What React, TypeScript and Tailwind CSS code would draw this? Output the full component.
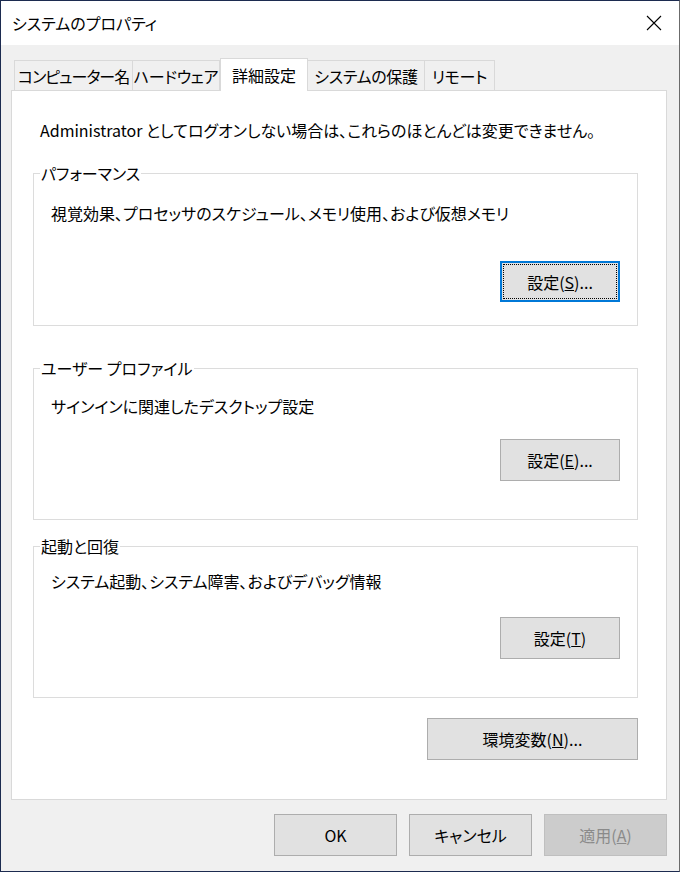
import React from "react";

const font = "font-['Noto_Sans_CJK_JP','Noto_Sans',sans-serif] [font-feature-settings:'palt']";

function Btn({ children, w = "w-[120px]", focused = false, disabled = false }: { children: React.ReactNode; w?: string; focused?: boolean; disabled?: boolean }) {
  if (focused) {
    return (
      <div className={`${w} h-[41px] border-2 border-[#0078d7] bg-[#e1e1e1] p-[1px]`}>
        <div className="h-full w-full border border-dotted border-black flex items-center justify-center text-[16px] text-black">
          {children}
        </div>
      </div>
    );
  }
  return (
    <div
      className={`${w} h-[42px] border flex items-center justify-center text-[16px] ${
        disabled ? "border-[#bfbfbf] bg-[#cccccc] text-[#8a8a8a]" : "border-[#adadad] bg-[#e1e1e1] text-black"
      }`}
    >
      {children}
    </div>
  );
}

function Group({ label, text, btn, h, textTop, btnTop }: { label: string; text: string; btn: React.ReactNode; h: string; textTop: string; btnTop: string }) {
  return (
    <div className={`relative border border-[#dcdcdc] ${h} flex flex-col`}>
      <div className="absolute left-[6px] -top-[13px] bg-white px-[1px] text-[16px] leading-[24px] text-black">{label}</div>
      <div className={`${textTop} pl-[17px] text-[16px] leading-[24px] text-black`}>{text}</div>
      <div className={`${btnTop} flex justify-end pr-[17px]`}>{btn}</div>
    </div>
  );
}

function Tab({ label, w, active = false, tight = false }: { label: string; w: string; active?: boolean; tight?: boolean }) {
  if (active) {
    return (
      <div className={`${w} h-[33px] -mb-[1px] relative z-10 bg-white border border-b-0 border-[#d9d9d9] flex items-center justify-center whitespace-nowrap text-[16px] text-black`}>
        {label}
      </div>
    );
  }
  return (
    <div
      className={`${w} h-[30px] bg-[#f0f0f0] border border-b-0 border-[#d9d9d9] -ml-[1px] first:ml-0 flex items-center justify-center whitespace-nowrap ${
        tight ? "tracking-[-1px]" : "tracking-[-0.3px]"
      } text-[16px] text-black`}
    >
      {label}
    </div>
  );
}

export default function App() {
  return (
    <div className={`${font} w-[680px] h-[872px] flex flex-col bg-[#f0f0f0] border-l border-t border-b border-[#1c2b50] border-r border-r-[#6b6b6b] overflow-hidden`}>
      <div className="h-[44px] bg-white flex items-center justify-between pl-[11px] pr-[17px]">
        <span className="text-[16px] text-black">システムのプロパティ</span>
        <svg width="16" height="16" viewBox="0 0 16 16">
          <path d="M1 1 L15 15 M15 1 L1 15" stroke="#000" strokeWidth="1.1" fill="none" />
        </svg>
      </div>
      <div className="flex-1 flex flex-col pl-[10px] pr-[12px]">
        <div className="h-[45px] flex items-end pl-[3px]">
          <Tab label="コンピューター名" w="w-[119px]" tight />
          <Tab label="ハードウェア" w="w-[88px]" />
          <Tab label="詳細設定" w="w-[88px]" active />
          <Tab label="システムの保護" w="w-[118px]" />
          <Tab label="リモート" w="w-[71px]" />
        </div>
        <div className="h-[710px] bg-white border border-[#d9d9d9] flex flex-col pl-[21px] pr-[28px]">
          <div className="pt-[27px] pl-[7px] text-[16px] leading-[24px] text-black">
            Administrator としてログオンしない場合は、これらのほとんどは変更できません。
          </div>
          <div className="mt-[31px]">
            <Group
              label="パフォーマンス"
              text="視覚効果、プロセッサのスケジュール、メモリ使用、および仮想メモリ"
              h="h-[153px]"
              textTop="mt-[27px]"
              btnTop="mt-[36px]"
              btn={
                <Btn focused>
                  設定(<span className="underline">S</span>)...
                </Btn>
              }
            />
          </div>
          <div className="mt-[42px]">
            <Group
              label="ユーザー プロファイル"
              text="サインインに関連したデスクトップ設定"
              h="h-[152px]"
              textTop="mt-[25px]"
              btnTop="mt-[21px]"
              btn={
                <Btn>
                  設定(<span className="underline">E</span>)...
                </Btn>
              }
            />
          </div>
          <div className="mt-[26px]">
            <Group
              label="起動と回復"
              text="システム起動、システム障害、およびデバッグ情報"
              h="h-[152px]"
              textTop="mt-[22px]"
              btnTop="mt-[24px]"
              btn={
                <Btn>
                  設定(<span className="underline">T</span>)
                </Btn>
              }
            />
          </div>
          <div className="mt-[20px] flex justify-end">
            <Btn w="w-[211px]">
              環境変数(<span className="underline">N</span>)...
            </Btn>
          </div>
        </div>
        <div className="mt-[14px] flex justify-end gap-[12px]">
          <Btn w="w-[123px]">OK</Btn>
          <Btn w="w-[123px]">キャンセル</Btn>
          <Btn w="w-[123px]" disabled>
            適用(<span className="underline">A</span>)
          </Btn>
        </div>
      </div>
    </div>
  );
}
